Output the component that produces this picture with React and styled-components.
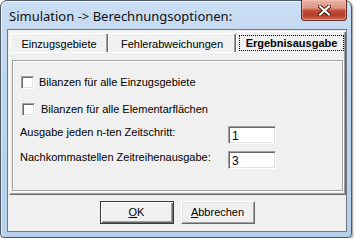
import React from "react";
import styled, { createGlobalStyle } from "styled-components";

const Global = createGlobalStyle`
  html, body { margin: 0; padding: 0; background: #ffffff; }
  * { box-sizing: border-box; }
`;

const Window = styled.div`
  width: 352px;
  height: 238px;
  border: 1px solid #4f5965;
  border-radius: 7px 7px 4px 4px;
  background: linear-gradient(180deg, #cadef4 0%, #bdd5ef 35%, #b6cfea 100%);
  box-shadow: 1px 1px 2px rgba(0, 0, 0, 0.4), inset 1px 1px 0 rgba(255,255,255,0.6);
  padding: 0 4px 5px 6px;
  display: flex;
  flex-direction: column;
`;

const TitleBar = styled.div`
  height: 28px;
  display: flex;
  align-items: flex-start;
  justify-content: space-between;
`;

const Title = styled.div`
  font-family: "Noto Sans", "Open Sans", sans-serif;
  font-size: 13px;
  color: #111;
  padding: 7px 0 0 2px;
  line-height: 17px;
`;

const CloseBtn = styled.div`
  width: 46px;
  height: 21px;
  margin-top: -1px;
  margin-right: 0px;
  border: 1px solid #5d2a22;
  border-top: none;
  border-radius: 0 0 4px 4px;
  background: linear-gradient(180deg, #eab1a4 0%, #dc9585 40%, #c4503c 52%, #b63c28 75%, #cf6a52 100%);
  box-shadow: inset 0 0 0 1px rgba(255, 200, 190, 0.5);
  display: flex;
  align-items: center;
  justify-content: center;
`;

const Client = styled.div`
  flex: 1;
  border: 1px solid #6f7a86;
  background: #f0f0f0;
  display: flex;
  flex-direction: column;
  padding-left: 1px;
  font-family: "Liberation Sans", Arial, sans-serif;
  font-size: 11px;
  color: #000;
`;

const TabStrip = styled.div`
  height: 22px;
  display: flex;
  align-items: flex-end;
  padding-left: 1px;
  position: relative;
  z-index: 1;
`;

const Tab = styled.div`
  width: ${(p) => p.$w}px;
  height: ${(p) => (p.$active ? 22 : 19)}px;
  margin-bottom: ${(p) => (p.$active ? -1 : 0)}px;
  background: #f0f0f0;
  border-top: 1px solid #ffffff;
  border-left: 1px solid #ffffff;
  border-right: 1px solid #696969;
  box-shadow: inset -1px 0 0 #a0a0a0;
  border-radius: 2px 2px 0 0;
  display: flex;
  justify-content: center;
  align-items: flex-start;
  padding-top: 3px;
  line-height: 14px;
  font-weight: ${(p) => (p.$active ? "bold" : "normal")};
  white-space: nowrap;
`;

const Focus = styled.span`
  display: block;
  width: 105px;
  margin-left: 1px;
  height: 16px;
  border: 1px dotted #000;
  text-align: center;
  line-height: 14px;
`;

const TabPanel = styled.div`
  width: 337px;
  height: 143px;
  border-top: 1px solid #ffffff;
  border-left: 1px solid #ffffff;
  border-right: 1px solid #696969;
  border-bottom: 1px solid #696969;
  box-shadow: inset -1px -1px 0 #a0a0a0;
  padding: 7px 2px 3px 2px;
  display: flex;
`;

const Inner = styled.div`
  flex: 1;
  border: 1px solid #a0a0a0;
  box-shadow: inset 1px 1px 0 #ffffff, 1px 1px 0 #ffffff;
  padding-left: 7px;
  display: flex;
  flex-direction: column;
`;

const CheckRow = styled.label`
  display: flex;
  align-items: center;
  gap: ${(p) => p.$gap}px;
  margin-top: ${(p) => p.$top}px;
  margin-left: ${(p) => p.$left}px;
  height: 13px;
  line-height: 13px;
`;

const CheckBox = styled.span`
  width: 13px;
  height: 13px;
  background: #fff;
  border-top: 1px solid #a0a0a0;
  border-left: 1px solid #a0a0a0;
  border-right: 1px solid #ffffff;
  border-bottom: 1px solid #ffffff;
  box-shadow: inset 1px 1px 0 #696969, inset -1px -1px 0 #e3e3e3;
  flex: none;
`;

const FieldRow = styled.div`
  display: flex;
  align-items: flex-start;
  margin-top: ${(p) => p.$top}px;
`;

const FieldLabel = styled.div`
  width: 208px;
  line-height: 13px;
  white-space: nowrap;
`;

const Input = styled.div`
  width: 48px;
  height: 18px;
  background: #fff;
  border-top: 1px solid #a0a0a0;
  border-left: 1px solid #a0a0a0;
  border-right: 1px solid #ffffff;
  border-bottom: 1px solid #ffffff;
  box-shadow: inset 1px 1px 0 #696969, inset -1px -1px 0 #e3e3e3;
  font-size: 12px;
  line-height: 14px;
  padding: 2px 0 0 3px;
`;

const ButtonRow = styled.div`
  display: flex;
  justify-content: center;
  gap: 7px;
  margin-top: 6px;
  padding-right: 1px;
`;

const Button = styled.div`
  width: 74px;
  height: 23px;
  background: #f0f0f0;
  border: 1px solid ${(p) => (p.$default ? "#3a3a3a" : "#696969")};
  ${(p) =>
    p.$default
      ? "box-shadow: inset 1px 1px 0 #ffffff, inset -1px -1px 0 #696969, inset -2px -2px 0 #a0a0a0;"
      : "border-top-color: #ffffff; border-left-color: #ffffff; box-shadow: inset 1px 1px 0 #e3e3e3, inset -1px -1px 0 #a0a0a0;"}
  display: flex;
  align-items: center;
  justify-content: center;
  line-height: 13px;
  padding-bottom: 1px;
`;

const Key = styled.span`
  text-decoration: underline;
`;

function CloseGlyph() {
  return (
    <svg width="13" height="11" viewBox="0 0 13 11">
      <path d="M2 1.5 L11 9.5 M11 1.5 L2 9.5" stroke="#4a1d16" strokeWidth="4" strokeLinecap="square" fill="none" />
      <path d="M2 1.5 L11 9.5 M11 1.5 L2 9.5" stroke="#ffffff" strokeWidth="2" strokeLinecap="square" fill="none" />
    </svg>
  );
}

export default function App() {
  return (
    <>
      <Global />
      <Window>
        <TitleBar>
          <Title>Simulation -&gt; Berechnungsoptionen:</Title>
          <CloseBtn>
            <CloseGlyph />
          </CloseBtn>
        </TitleBar>
        <Client>
          <TabStrip>
            <Tab $w={98}>Einzugsgebiete</Tab>
            <Tab $w={128}>Fehlerabweichungen</Tab>
            <Tab $w={110} $active>
              <Focus>Ergebnisausgabe</Focus>
            </Tab>
          </TabStrip>
          <TabPanel>
            <Inner>
              <CheckRow $top={15} $left={1} $gap={5}>
                <CheckBox />
                Bilanzen für alle Einzugsgebiete
              </CheckRow>
              <CheckRow $top={14} $left={2} $gap={6}>
                <CheckBox />
                Bilanzen für alle Elementarflächen
              </CheckRow>
              <FieldRow $top={10}>
                <FieldLabel>Ausgabe jeden n-ten Zeitschritt:</FieldLabel>
                <Input>1</Input>
              </FieldRow>
              <FieldRow $top={7}>
                <FieldLabel>Nachkommastellen Zeitreihenausgabe:</FieldLabel>
                <Input>3</Input>
              </FieldRow>
            </Inner>
          </TabPanel>
          <ButtonRow>
            <Button $default>
              <span>
                <Key>O</Key>K
              </span>
            </Button>
            <Button>
              <span>
                <Key>A</Key>bbrechen
              </span>
            </Button>
          </ButtonRow>
        </Client>
      </Window>
    </>
  );
}
